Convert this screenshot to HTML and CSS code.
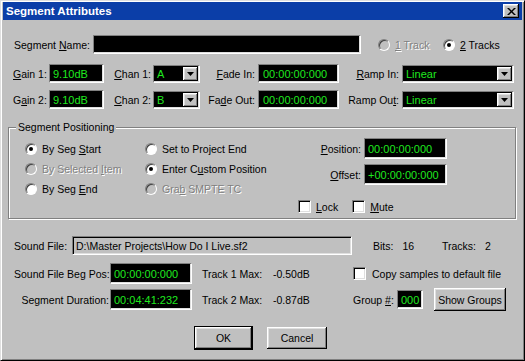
FILE: index.html
```html
<!DOCTYPE html>
<html lang="en">
<head>
    <meta charset="UTF-8">
    <title>Segment Attributes</title>
    <link rel="stylesheet" href="styles.css">
</head>
<body>
<div class="window">
    <div class="titlebar">
        <span class="title">Segment Attributes</span>
        <span class="close-btn">
            <svg width="9" height="7" viewBox="0 0 9 7"><path d="M0 0h2l2.5 2.5L7 0h2L5.5 3.5 9 7H7L4.5 4.5 2 7H0l3.5-3.5z" fill="#000"/></svg>
        </span>
    </div>

    <div class="row row-name">
        <span class="lbl name-lbl">Segment <u>N</u>ame:</span>
        <div class="lcd name-field"></div>
        <div class="radio-item track-one disabled"><span class="radio"></span><span class="txt"><u>1</u> Track</span></div>
        <div class="radio-item"><span class="radio checked"></span><span><u>2</u> Tracks</span></div>
    </div>

    <div class="row row-gain">
        <span class="lbl gain-lbl"><u>G</u>ain 1:</span>
        <div class="lcd gain-field">9.10dB</div>
        <span class="lbl chan-lbl"><u>C</u>han 1:</span>
        <div class="combo chan-combo"><span class="combo-val">A</span><span class="drop-btn"><svg width="7" height="4" viewBox="0 0 7 4"><path d="M0 0h7L3.5 4z" fill="#000"/></svg></span></div>
        <span class="lbl fade-lbl"><u>F</u>ade In:</span>
        <div class="lcd time-field">00:00:00:000</div>
        <span class="lbl ramp-lbl"><u>R</u>amp In:</span>
        <div class="combo ramp-combo"><span class="combo-val">Linear</span><span class="drop-btn"><svg width="7" height="4" viewBox="0 0 7 4"><path d="M0 0h7L3.5 4z" fill="#000"/></svg></span></div>
    </div>

    <div class="row row-gain row-gain2">
        <span class="lbl gain-lbl">G<u>a</u>in 2:</span>
        <div class="lcd gain-field">9.10dB</div>
        <span class="lbl chan-lbl"><u>C</u>han 2:</span>
        <div class="combo chan-combo"><span class="combo-val">B</span><span class="drop-btn"><svg width="7" height="4" viewBox="0 0 7 4"><path d="M0 0h7L3.5 4z" fill="#000"/></svg></span></div>
        <span class="lbl fade-lbl">Fa<u>d</u>e Out:</span>
        <div class="lcd time-field">00:00:00:000</div>
        <span class="lbl ramp-lbl">Ramp Ou<u>t</u>:</span>
        <div class="combo ramp-combo"><span class="combo-val">Linear</span><span class="drop-btn"><svg width="7" height="4" viewBox="0 0 7 4"><path d="M0 0h7L3.5 4z" fill="#000"/></svg></span></div>
    </div>

    <fieldset class="group">
        <legend class="group-title">Segment Positioning</legend>
        <div class="group-body">
            <div class="radio-grid">
                <div class="radio-item"><span class="radio checked"></span><span>By Seg <u>S</u>tart</span></div>
                <div class="radio-item"><span class="radio"></span><span>Set to Project End</span></div>
                <div class="radio-item disabled"><span class="radio"></span><span class="txt">By Selected <u>I</u>tem</span></div>
                <div class="radio-item"><span class="radio checked"></span><span>Enter C<u>u</u>stom Position</span></div>
                <div class="radio-item"><span class="radio"></span><span>By Seg <u>E</u>nd</span></div>
                <div class="radio-item disabled"><span class="radio"></span><span class="txt">Gra<u>b</u> SMPTE TC</span></div>
            </div>
            <div class="pos-col">
                <div class="pos-row"><span class="lbl"><u>P</u>osition:</span><div class="lcd pos-field">00:00:00:000</div></div>
                <div class="pos-row offset-row"><span class="lbl"><u>O</u>ffset:</span><div class="lcd pos-field">+00:00:00:000</div></div>
                <div class="check-row">
                    <span class="check"></span><span class="check-txt"><u>L</u>ock</span>
                    <span class="check mute-check"></span><span class="check-txt"><u>M</u>ute</span>
                </div>
            </div>
        </div>
    </fieldset>

    <div class="row row-file">
        <span class="lbl file-lbl">Sound File:</span>
        <div class="file-field">D:\Master Projects\How Do I Live.sf2</div>
        <span class="info bits">Bits:<span class="info-val">16</span></span>
        <span class="info">Tracks:<span class="info-val">2</span></span>
    </div>

    <div class="row row-beg">
        <span class="lbl time-lbl">Sound File Beg Pos:</span>
        <div class="lcd len-field">00:00:00:000</div>
        <span class="lbl max-lbl">Track 1 Max:</span>
        <span class="max-val">-0.50dB</span>
        <span class="check"></span><span class="copy-txt">Copy samples to default file</span>
    </div>

    <div class="row row-dur">
        <span class="lbl time-lbl">Segment Duration:</span>
        <div class="lcd len-field">00:04:41:232</div>
        <span class="lbl max-lbl">Track 2 Max:</span>
        <span class="max-val">-0.87dB</span>
        <span class="lbl group-lbl">Group <u>#</u>:</span>
        <div class="lcd group-field">000</div>
        <span class="btn show-btn">Show Groups</span>
    </div>

    <div class="row row-buttons">
        <span class="btn default-btn ok-btn">OK</span>
        <span class="btn cancel-btn">Cancel</span>
    </div>
</div>
</body>
</html>
```

FILE: styles.css
```css
* {
    box-sizing: border-box;
}

body {
    margin: 0;
    font-family: "Liberation Sans", Arial, sans-serif;
    font-size: 10.5px;
    color: #000;
    background: #c0c0c0;
}

u {
    text-decoration: underline;
    text-underline-offset: 1px;
}

.window {
    width: 525px;
    height: 361px;
    padding: 1px 2px 2px 2px;
    background: #c0c0c0;
    border: 1px solid;
    border-color: #dfdfdf #000 #000 #dfdfdf;
    box-shadow: inset 1px 1px #fff, inset -1px -1px #808080;
    overflow: hidden;
}

/* title bar */
.titlebar {
    height: 18px;
    padding: 0 3px 0 3px;
    background: #0b3ea8;
    display: flex;
    align-items: center;
    justify-content: space-between;
}

.title {
    color: #fff;
    font-weight: bold;
    font-size: 11.5px;
}

.close-btn {
    width: 16px;
    height: 14px;
    background: #c0c0c0;
    box-shadow: inset -1px -1px #000, inset 1px 1px #fff, inset -2px -2px #808080, inset 2px 2px #dfdfdf;
    display: flex;
    align-items: center;
    justify-content: center;
}

/* common controls */
.row {
    display: flex;
    align-items: center;
}

.lbl {
    white-space: nowrap;
    flex: none;
}

.lcd {
    flex: none;
    background: #000;
    color: #1fe81f;
    font-size: 11px;
    padding-left: 3px;
    border: 1px solid;
    border-color: #808080 #fff #fff #808080;
    box-shadow: inset -1px -1px #dfdfdf;
    display: flex;
    align-items: center;
    white-space: nowrap;
}

.combo {
    flex: none;
    height: 18px;
    background: #000;
    color: #1fe81f;
    font-size: 11px;
    border: 1px solid;
    border-color: #808080 #fff #fff #808080;
    box-shadow: inset -1px -1px #dfdfdf;
    display: flex;
    align-items: center;
    justify-content: space-between;
    padding: 0 1px 0 3px;
}

.drop-btn {
    width: 15px;
    height: 14px;
    background: #c0c0c0;
    box-shadow: inset -1px -1px #000, inset 1px 1px #fff, inset -2px -2px #808080, inset 2px 2px #dfdfdf;
    display: flex;
    align-items: center;
    justify-content: center;
}

.radio-item {
    display: flex;
    align-items: center;
    gap: 5px;
    white-space: nowrap;
}

.radio {
    flex: none;
    position: relative;
    width: 12px;
    height: 12px;
    border-radius: 50%;
    background: #fff;
    border: 1px solid;
    border-color: #808080 #fff #fff #808080;
    box-shadow: inset 1px 1px #404040;
}

.radio.checked::after {
    content: "";
    position: absolute;
    left: 3px;
    top: 3px;
    width: 4px;
    height: 4px;
    border-radius: 50%;
    background: #000;
}

.disabled .radio {
    background: #c0c0c0;
}

.disabled .txt {
    color: #808080;
    text-shadow: 1px 1px #fff;
}

.check {
    flex: none;
    width: 13px;
    height: 13px;
    background: #fff;
    border: 1px solid;
    border-color: #808080 #fff #fff #808080;
    box-shadow: inset 1px 1px #000, inset -1px -1px #dfdfdf;
}

.btn {
    flex: none;
    background: #c0c0c0;
    box-shadow: inset -1px -1px #000, inset 1px 1px #fff, inset -2px -2px #808080, inset 2px 2px #dfdfdf;
    display: flex;
    align-items: center;
    justify-content: center;
    white-space: nowrap;
}

.default-btn {
    border: 1px solid #000;
}

/* name row */
.row-name {
    margin-top: 15px;
    height: 19px;
    padding-left: 11px;
}

.name-lbl {
    width: 79px;
}

.name-field {
    width: 268px;
    height: 19px;
}

.track-one {
    margin-left: 17px;
    width: 65px;
}

/* gain rows */
.row-gain {
    margin-top: 10px;
    height: 19px;
    padding-left: 10px;
}

.row-gain2 {
    margin-top: 7px;
}

.gain-lbl {
    width: 36px;
}

.gain-field {
    width: 55px;
    height: 19px;
}

.chan-lbl {
    width: 49px;
    text-align: right;
    padding-right: 2px;
}

.chan-combo {
    width: 47px;
}

.fade-lbl {
    width: 58px;
    text-align: right;
    padding-right: 3px;
}

.time-field {
    width: 81px;
    height: 19px;
    padding-left: 4px;
}

.ramp-lbl {
    width: 63px;
    text-align: right;
    padding-right: 3px;
}

.ramp-combo {
    width: 112px;
}

/* positioning group */
.group {
    margin: 12px 0 0 5px;
    width: 508px;
    padding: 0 0 5px 0;
    min-width: 0;
    border: 1px solid #808080;
    box-shadow: inset 1px 1px #fff, 1px 1px #fff;
}

.group-title {
    margin-left: 7px;
    padding: 0 2px;
    background: #c0c0c0;
}

.group-body {
    display: flex;
    padding: 5px 0 0 16px;
}

.radio-grid {
    width: 273px;
    margin-top: 1px;
    display: grid;
    grid-template-columns: 120px 153px;
    grid-auto-rows: 20px;
    align-content: start;
}

.pos-col {
    width: 149px;
}

.pos-row {
    display: flex;
    align-items: center;
    justify-content: flex-end;
    gap: 3px;
}

.offset-row {
    margin-top: 5px;
}

.pos-field {
    width: 83px;
    height: 21px;
}

.check-row {
    margin-top: 15px;
    display: flex;
    align-items: center;
}

.check-txt {
    margin-left: 5px;
}

.mute-check {
    margin-left: 14px;
}

/* sound file rows */
.row-file {
    margin-top: 17px;
    height: 19px;
    padding-left: 11px;
}

.file-lbl {
    width: 58px;
}

.file-field {
    width: 280px;
    height: 19px;
    padding-left: 3px;
    border: 1px solid;
    border-color: #808080 #fff #fff #808080;
    box-shadow: inset 1px 1px #000, inset -1px -1px #dfdfdf;
    display: flex;
    align-items: center;
    white-space: nowrap;
}

.info {
    white-space: nowrap;
}

.bits {
    margin-left: 21px;
    width: 69px;
}

.info-val {
    margin-left: 9px;
}

.row-beg {
    margin-top: 8px;
    height: 21px;
    padding-left: 11px;
}

.row-dur {
    margin-top: 4px;
    height: 23px;
    padding-left: 11px;
}

.time-lbl {
    width: 96px;
    text-align: right;
    padding-right: 1px;
}

.len-field {
    width: 82px;
    height: 21px;
}

.max-lbl {
    margin-left: 10px;
    width: 71px;
}

.max-val {
    width: 80px;
}

.copy-txt {
    margin-left: 6px;
    white-space: nowrap;
}

.group-lbl {
    width: 44px;
}

.group-field {
    width: 26px;
    height: 19px;
}

.show-btn {
    margin-left: 11px;
    width: 72px;
    height: 23px;
}

/* dialog buttons */
.row-buttons {
    margin-top: 15px;
    padding-left: 191px;
}

.ok-btn {
    width: 59px;
    height: 24px;
}

.cancel-btn {
    margin-left: 14px;
    width: 60px;
    height: 22px;
}
```
